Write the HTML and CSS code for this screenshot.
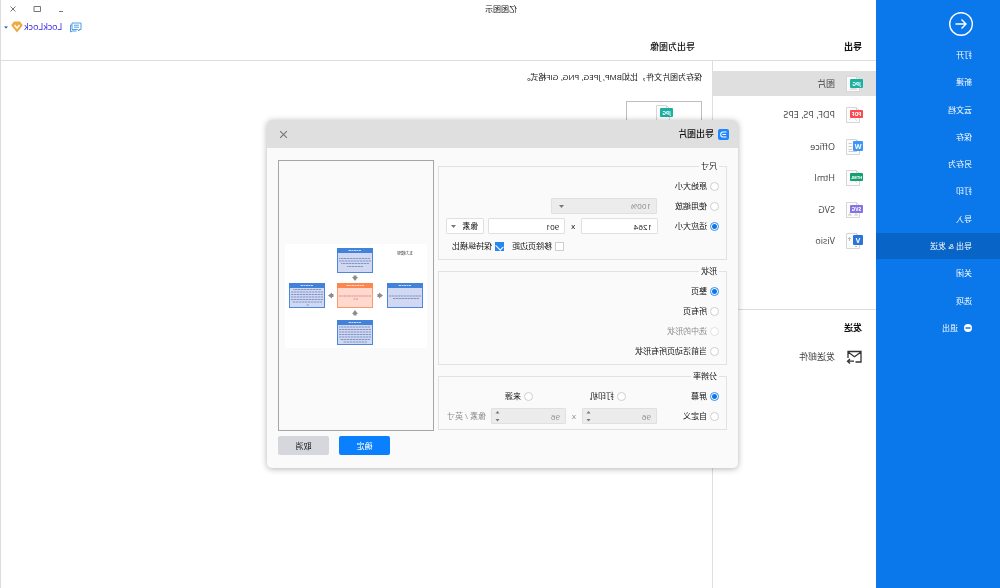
FILE: index.html
```html
<!DOCTYPE html>
<html lang="zh-CN">
<head>
<meta charset="utf-8">
<title>亿图图示</title>
<link rel="stylesheet" href="styles.css">
</head>
<body>
<svg class="defs" aria-hidden="true">
  <symbol id="page" viewBox="0 0 18 18">
    <path d="M6.500 1.500H16.500V16.500H3.500V4.500ZM6.500 1.500V4.500H3.500" fill="#fcfcfc" stroke="#d6d6d6"/>
  </symbol>
  <symbol id="caret" viewBox="0 0 5 3"><path d="M0 0H5L2.500 3Z" fill="currentColor"/></symbol>
</svg>
<div class="app">
  <aside class="sidebar">
    <button class="back" type="button" aria-label="返回">
      <svg viewBox="0 0 24 24"><circle cx="12" cy="12" r="11.300"/><path d="M17.500 12H7M11.500 7.500L7 12L11.500 16.500"/></svg>
    </button>
    <nav class="menu">
      <a class="menu-item" href="#">打开</a>
      <a class="menu-item" href="#">新建</a>
      <a class="menu-item" href="#">云文档</a>
      <a class="menu-item" href="#">保存</a>
      <a class="menu-item" href="#">另存为</a>
      <a class="menu-item" href="#">打印</a>
      <a class="menu-item" href="#">导入</a>
      <a class="menu-item active" href="#">导出 &amp; 发送</a>
      <a class="menu-item" href="#">关闭</a>
      <a class="menu-item" href="#">选项</a>
      <a class="menu-item" href="#"><svg class="exit" viewBox="0 0 8 8"><circle cx="4" cy="4" r="4" fill="#fff"/><path d="M1.500 4H6.500" stroke="#0a77eb" stroke-width="1.500"/></svg>退出</a>
    </nav>
  </aside>
  <div class="window">
    <header class="header">
      <div class="titlebar">
        <h1 class="app-title">亿图图示</h1>
        <div class="controls">
          <button type="button" aria-label="最小化"><svg viewBox="0 0 8 8"><path d="M2 6.500H6"/></svg></button>
          <button type="button" aria-label="最大化"><svg viewBox="0 0 8 8"><path d="M0.500 1.500H7V6.500H0.500Z"/></svg></button>
          <button type="button" aria-label="关闭"><svg viewBox="0 0 8 8"><path d="M1.500 1.500L6.500 6.500M6.500 1.500L1.500 6.500"/></svg></button>
        </div>
      </div>
      <div class="account">
        <svg class="chat" viewBox="0 0 12 11"><path d="M1 1H10V7.500H4.500L3 9V7.500H1ZM10 3H11.500V10L10 9H5.500M3 3.200H8M3 5.200H8" fill="none" stroke="#4c9de8"/></svg>
        <a class="user" href="#">LockLock</a>
        <svg class="gem" viewBox="0 0 12 12"><path d="M3 0.500H9L11.800 4.200L6 11.500L0.200 4.200Z" fill="#efa93d"/><path d="M3.500 4L6 7L8.500 4" fill="none" stroke="#fff" stroke-width="1.500"/></svg>
        <svg class="tiny-caret" viewBox="0 0 5 3"><use href="#caret"/></svg>
      </div>
      <div class="headings">
        <h2 class="col-title strong">导出</h2>
        <h2 class="col-title">导出为图像</h2>
      </div>
    </header>
    <div class="content">
      <section class="formats">
        <div class="format-list">
          <a class="format selected" href="#"><svg class="ficon" viewBox="0 0 18 18"><use href="#page"/><path d="M5 15L9 11L14 15Z" fill="#dedede"/><rect x="0" y="4" width="13" height="9" rx="1" fill="#1bb0a0"/><text x="6.500" y="10.500">JPG</text></svg>图片</a>
          <a class="format" href="#"><svg class="ficon" viewBox="0 0 18 18"><use href="#page"/><path d="M6 15L10 10L14 14" fill="none" stroke="#ddd"/><rect x="0" y="4" width="13" height="8" rx="1" fill="#fb4b52"/><text x="6.500" y="10">PDF</text></svg>PDF, PS, EPS</a>
          <a class="format" href="#"><svg class="ficon" viewBox="0 0 18 18"><use href="#page"/><path d="M11 5.500H14.500M11 8.500H14.500M11 11.500H14.500M6 13.500H14.500" stroke="#ccc"/><rect x="0" y="3" width="10" height="10" rx="1" fill="#3d97f8"/><text class="single" x="5" y="10.500">W</text></svg>Office</a>
          <a class="format" href="#"><svg class="ficon" viewBox="0 0 18 18"><use href="#page"/><path d="M6 14L9 11H14" fill="none" stroke="#ddd"/><rect x="0" y="4" width="13" height="8" rx="1" fill="#15a06f"/><text class="long" x="6.500" y="9.500">HTML</text></svg>Html</a>
          <a class="format" href="#"><svg class="ficon" viewBox="0 0 18 18"><use href="#page"/><path d="M7 14V11H13V14M5 14H9M11 14H15" fill="none" stroke="#ccc"/><rect x="0" y="4" width="13" height="8" rx="1" fill="#8571e5"/><text x="6.500" y="10">SVG</text></svg>SVG</a>
          <a class="format" href="#"><svg class="ficon" viewBox="0 0 18 18"><use href="#page"/><path d="M13.500 5V9M12 6.500H15M6 14.500H8" stroke="#bbb"/><rect x="0" y="3" width="10" height="10" rx="1" fill="#2b74d9"/><text class="single" x="5" y="10.500">V</text></svg>Visio</a>
        </div>
        <div class="send">
          <h2 class="col-title strong">发送</h2>
          <a class="format mail" href="#"><svg class="ficon" viewBox="0 0 18 18"><path d="M15 10V3.500H2V14H7.500M2 4L8.500 8.700L15 4M9 13.200H15.500M13 11L15.500 13.200L13 15.500" fill="none" stroke="#333" stroke-width="1.300"/></svg>发送邮件</a>
        </div>
      </section>
      <main class="detail">
        <p class="intro">保存为图片文件，比如BMP, JPEG, PNG, GIF格式。</p>
        <button class="tile" type="button" aria-label="JPG"><svg class="ficon" viewBox="0 0 18 18"><use href="#page"/><rect x="0" y="4" width="13" height="9" rx="1" fill="#1bb0a0"/><text x="6.500" y="10.500">JPG</text></svg></button>
      </main>
    </div>
  </div>

  <form class="dialog" role="dialog" aria-labelledby="dialog-title">
    <header class="dialog-head">
      <svg class="logo" viewBox="0 0 11 11"><rect width="11" height="11" rx="2" fill="#1f86fb"/><path d="M2.500 3H6Q8.300 3 8.300 5.500Q8.300 8 6 8H2.500M3 5.500H6.500" fill="none" stroke="#fff" stroke-width="1.100"/></svg>
      <h2 id="dialog-title">导出图片</h2>
      <button class="close" type="button" aria-label="关闭"><svg viewBox="0 0 8 8"><path d="M1 1L7 7M7 1L1 7"/></svg></button>
    </header>
    <div class="dialog-body">
      <div class="options">
        <fieldset class="group">
          <legend>尺寸</legend>
          <div class="row"><label class="choice"><input type="radio" name="size">原始大小</label></div>
          <div class="row">
            <label class="choice lead"><input type="radio" name="size">使用缩放</label>
            <span class="picker scale"><select class="field" aria-label="缩放" disabled><option>100%</option></select><svg viewBox="0 0 5 3"><use href="#caret"/></svg></span>
          </div>
          <div class="row">
            <label class="choice lead"><input type="radio" name="size" checked>适应大小</label>
            <input class="field size" aria-label="宽" value="1264">
            <span class="times">x</span>
            <input class="field size" aria-label="高" value="901">
            <span class="picker unit"><select class="field" aria-label="单位"><option>像素</option></select><svg viewBox="0 0 5 3"><use href="#caret"/></svg></span>
          </div>
          <div class="row checks">
            <label class="choice"><input type="checkbox">移除页边距</label>
            <label class="choice"><input type="checkbox" checked>保持纵横比</label>
          </div>
        </fieldset>
        <fieldset class="group">
          <legend>形状</legend>
          <div class="row"><label class="choice"><input type="radio" name="shape" checked>整页</label></div>
          <div class="row"><label class="choice"><input type="radio" name="shape">所有页</label></div>
          <div class="row"><label class="choice off"><input type="radio" name="shape" disabled>选中的形状</label></div>
          <div class="row"><label class="choice"><input type="radio" name="shape">当前活动页所有形状</label></div>
        </fieldset>
        <fieldset class="group">
          <legend>分辨率</legend>
          <div class="row sources">
            <label class="choice"><input type="radio" name="dpi" checked>屏幕</label>
            <label class="choice"><input type="radio" name="dpi">打印机</label>
            <label class="choice"><input type="radio" name="dpi">来源</label>
          </div>
          <div class="row">
            <label class="choice lead"><input type="radio" name="dpi">自定义</label>
            <span class="picker spin"><input class="field" aria-label="水平分辨率" value="96" disabled><svg viewBox="0 0 5 12"><path d="M0.500 3.500H4.500L2.500 1ZM0.500 9H4.500L2.500 11.500Z" fill="currentColor"/></svg></span>
            <span class="times off">x</span>
            <span class="picker spin"><input class="field" aria-label="垂直分辨率" value="96" disabled><svg viewBox="0 0 5 12"><path d="M0.500 3.500H4.500L2.500 1ZM0.500 9H4.500L2.500 11.500Z" fill="currentColor"/></svg></span>
            <span class="per off">像素 / 英寸</span>
          </div>
        </fieldset>
      </div>
      <div class="side">
        <div class="preview">
          <svg class="sheet" viewBox="0 0 142 104">
            <defs>
              <symbol id="node" viewBox="0 0 36 25">
                <rect x="0.500" y="0.500" width="35" height="24" fill="#d0d8f2" stroke="#4d86da"/>
                <rect width="36" height="5" fill="#4382db"/>
                <path d="M12 2.500H25" stroke="#c9dbf6" stroke-dasharray="2 0.500"/>
              </symbol>
              <path id="arrow" d="M-3 -1H-1.500V-2.500H1.500V-1H3L0 3Z" fill="#8c8c8c"/>
            </defs>
            <rect width="142" height="104" fill="#fff"/>
            <text x="14" y="11" font-size="4" fill="#333">五力模型</text>
            <use href="#node" x="54" y="4" width="36" height="25"/>
            <use href="#node" x="4" y="39" width="36" height="25"/>
            <use href="#node" x="102" y="39" width="36" height="25"/>
            <use href="#node" x="54" y="76" width="36" height="25"/>
            <rect x="54.500" y="39.500" width="35" height="24" fill="#ffd9ce" stroke="#f69a72"/>
            <rect x="54" y="39" width="36" height="5" fill="#fb8650"/>
            <path d="M63 41.500H81" stroke="#ffd7c2" stroke-dasharray="2 0.500"/>
            <path d="M56 52H88M69 55H74" stroke="#dd8f88" stroke-dasharray="2 0.500"/>
            <g stroke="#8496c8" stroke-dasharray="2 0.500 3 0.500">
              <path d="M57 14.500H88M56 17H88M58 19.500H86M64 22.500H80"/>
              <path d="M6 52H38M8 54.500H34"/>
              <path d="M106 45.500H134M104 48H136M104 50.500H136M104 53H136M104 55.500H136M105 58H135M118 61H121"/>
              <path d="M57 83H88M56 85.500H88M56 88H88M56 90.500H88M56 93H88M57 95.500H87M60 98H84"/>
            </g>
            <use href="#arrow" transform="translate(72 34)"/>
            <use href="#arrow" transform="translate(72 69) rotate(180)"/>
            <use href="#arrow" transform="translate(47 51.500) rotate(90)"/>
            <use href="#arrow" transform="translate(96 51.500) rotate(-90)"/>
          </svg>
        </div>
        <div class="actions">
          <button class="btn primary" type="submit">确定</button>
          <button class="btn" type="button">取消</button>
        </div>
      </div>
    </div>
  </form>
</div>
</body>
</html>
```

FILE: styles.css
```css
* {
  box-sizing: border-box;
}

body {
  margin: 0;
  color: #111;
  background: #fff;
  font: 8px/12px "Open Sans", "Noto Sans CJK SC", sans-serif;
}

a {
  color: inherit;
  text-decoration: none;
}

h1,
h2,
p {
  margin: 0;
  font-size: inherit;
  font-weight: 400;
}

button,
input,
select {
  margin: 0;
  color: inherit;
  font: inherit;
}

button {
  padding: 0;
  border: 0;
  background: none;
}

.defs {
  position: absolute;
  width: 0;
  height: 0;
}

/* The whole window is shown flipped, as seen in a mirror. */
.app {
  position: relative;
  display: flex;
  min-height: 100vh;
  transform: scaleX(-1);
}

.sidebar {
  flex: none;
  width: 124px;
  padding-top: 12px;
  color: #fff;
  background: #0a77eb;
}

.back {
  display: block;
  width: 24px;
  height: 24px;
  margin-left: 27px;
}

.back svg {
  display: block;
  fill: none;
  stroke: #fff;
  stroke-width: 1.4;
}

.menu {
  display: flex;
  flex-direction: column;
  justify-content: space-between;
  min-height: 299px;
  margin-top: 6px;
}

.menu-item {
  display: flex;
  align-items: center;
  gap: 6px;
  height: 26px;
  padding-left: 28px;
}

.menu-item.active {
  background: #0865c7;
}

.exit {
  width: 8px;
  height: 8px;
}

.window {
  flex: 1;
  display: flex;
  flex-direction: column;
  min-width: 0;
  border-right: 1px solid #dcdcdc;
}

.header {
  border-bottom: 1px solid #dedede;
}

.titlebar {
  display: flex;
  align-items: center;
  justify-content: flex-end;
  height: 18px;
}

.app-title {
  margin-right: auto;
  padding-left: 359px;
}

.controls {
  display: flex;
  gap: 16px;
  padding-right: 8px;
}

.controls button {
  width: 8px;
  height: 8px;
}

.controls svg,
.close svg {
  display: block;
  fill: none;
  stroke: #777;
}

.account {
  display: flex;
  align-items: center;
  justify-content: flex-end;
  height: 18px;
  padding-right: 3px;
}

.chat {
  width: 12px;
  height: 11px;
  margin-right: 8px;
}

.user {
  color: #2a1fe8;
  font-size: 9px;
}

.gem {
  width: 12px;
  height: 12px;
  margin: 0 3px 0 1px;
}

.tiny-caret {
  width: 4px;
  height: 3px;
  color: #1d5fa8;
}

.headings {
  display: grid;
  grid-template-columns: 167px 1fr;
  height: 24px;
  padding: 5px 0 0 14px;
}

.col-title {
  font-size: 9px;
  font-weight: 500;
}

.col-title.strong {
  font-weight: 700;
}

.content {
  flex: 1;
  display: flex;
}

.formats {
  flex: none;
  width: 164px;
  border-right: 1px solid #dedede;
}

.format-list {
  display: flex;
  flex-direction: column;
  justify-content: space-between;
  min-height: 183px;
  margin-top: 10px;
}

.format {
  display: flex;
  align-items: center;
  gap: 10px;
  height: 25px;
  padding-left: 13px;
  color: #444;
  font-size: 9px;
}

.format.selected {
  background: #dfdfdf;
}

.ficon {
  width: 18px;
  height: 18px;
}

.ficon text {
  fill: #fff;
  font-size: 5px;
  font-weight: 700;
  text-anchor: middle;
}

.ficon .single {
  font-size: 7px;
}

.ficon .long {
  font-size: 4px;
}

.send {
  margin-top: 55px;
  padding-top: 12px;
  border-top: 1px solid #dedede;
}

.send .col-title {
  padding-left: 14px;
}

.mail {
  margin-top: 10px;
}

.detail {
  flex: 1;
  padding: 10px;
}

.tile {
  display: flex;
  justify-content: center;
  width: 76px;
  height: 60px;
  margin-top: 18px;
  padding-top: 2px;
  border: 1px solid #bdbdbd;
}

.dialog {
  position: absolute;
  top: 120px;
  left: 262px;
  width: 471px;
  overflow: hidden;
  border-radius: 5px;
  background: #fafafa;
  box-shadow: 0 1px 6px rgba(0, 0, 0, 0.3);
}

.dialog-head {
  display: flex;
  align-items: center;
  gap: 4px;
  height: 28px;
  padding: 0 12px 0 9px;
  background: #dfdfdf;
}

.dialog-head h2 {
  font-size: 9px;
  font-weight: 500;
}

.logo {
  width: 11px;
  height: 11px;
}

.close {
  width: 9px;
  height: 9px;
  margin-left: auto;
}

.dialog-body {
  display: grid;
  grid-template-columns: 289px 156px;
  gap: 4px;
  padding: 12px 11px 13px;
}

.options {
  display: flex;
  flex-direction: column;
  gap: 5px;
}

.group {
  min-width: 0;
  margin: 0;
  padding: 4px 7px 3px;
  border: 1px solid #e2e2e2;
}

.group legend {
  padding: 0 2px;
  line-height: 12px;
}

.row {
  display: flex;
  align-items: center;
  height: 20px;
}

.choice {
  display: flex;
  align-items: center;
  gap: 3px;
}

.lead {
  width: 62px;
}

.off {
  color: #8c8c8c;
}

.choice input {
  appearance: none;
  display: grid;
  place-items: center;
  width: 9px;
  height: 9px;
  border: 1px solid #cfcfcf;
  background: #fff;
}

.choice input[type="radio"] {
  border-radius: 50%;
}

.choice input[type="radio"]:checked {
  border-color: #2f8bf0;
  background: radial-gradient(circle, #0a77eb 2px, #fff 3px);
}

.choice input:disabled {
  border-color: #e2e2e2;
}

.choice input[type="checkbox"]:checked {
  border-color: #2687ee;
  background: #2687ee;
}

.choice input[type="checkbox"]:checked::after {
  content: "";
  width: 4px;
  height: 6px;
  border: solid #fff;
  border-width: 0 1px 1px 0;
  transform: rotate(45deg);
}

.field {
  width: 100%;
  height: 16px;
  padding: 0 5px;
  border: 1px solid #e0e0e0;
  border-radius: 1px;
  background: #fff;
}

.field:disabled {
  color: #8c8c8c;
  background: #ececec;
  opacity: 1;
}

select.field {
  appearance: none;
}

.size {
  width: 77px;
}

.times {
  width: 16px;
  text-align: center;
}

.picker {
  position: relative;
  display: flex;
}

.picker svg {
  position: absolute;
  top: 7px;
  right: 8px;
  width: 5px;
  height: 3px;
  color: #777;
}

.scale {
  width: 106px;
}

.unit {
  width: 39px;
  margin-left: 4px;
}

.unit svg {
  right: 5px;
}

.spin {
  width: 75px;
}

.spin svg {
  top: 2px;
  right: 4px;
  height: 12px;
}

.per {
  margin-left: 5px;
}

.checks {
  gap: 8px;
  padding-left: 155px;
}

.sources {
  display: grid;
  grid-template-columns: 93px 93px 1fr;
}

.side {
  display: flex;
  flex-direction: column;
  gap: 5px;
}

.preview {
  display: flex;
  align-items: center;
  min-height: 271px;
  padding: 6px;
  border: 1px solid #a6a6a6;
}

.sheet {
  width: 100%;
}

.actions {
  display: flex;
  justify-content: flex-end;
  gap: 10px;
}

.btn {
  width: 51px;
  height: 19px;
  border-radius: 2px;
  background: #d5d7dc;
}

.btn.primary {
  color: #fff;
  background: #0a80ff;
}
```
